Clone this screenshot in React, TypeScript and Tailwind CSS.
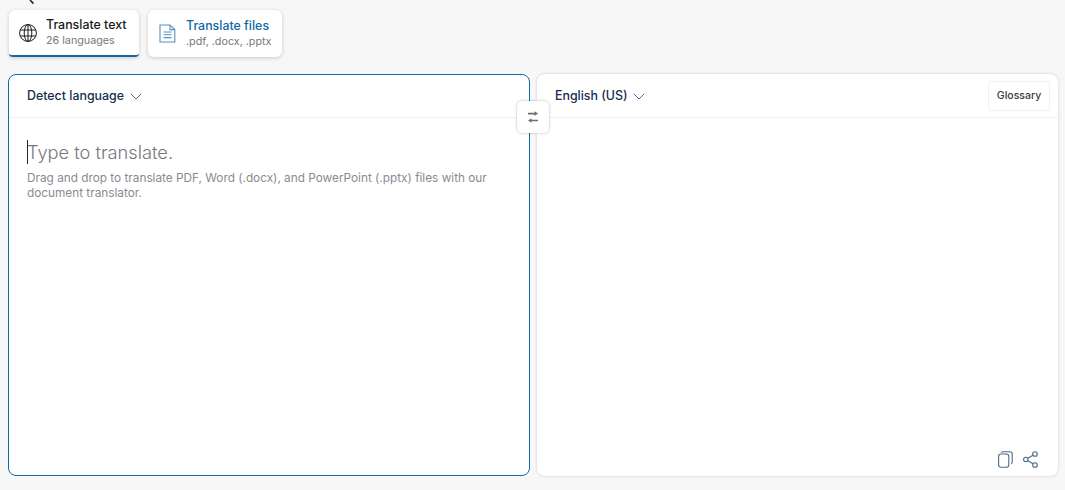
import React from "react";

const navy = "#0f2b46";

function Chevron() {
  return (
    <svg width="12" height="7" viewBox="0 0 12 7" fill="none" stroke="#5a6a7c" strokeWidth="1" strokeLinecap="round" strokeLinejoin="round" className="ml-[5.5px] mt-[1px]">
      <path d="M1 1l5 5 5-5" />
    </svg>
  );
}

export default function App() {
  return (
    <div className="relative w-[1065px] h-[490px] overflow-hidden bg-[#f7f7f7] font-['Inter','Liberation_Sans',sans-serif]">
      <svg width="8" height="5" viewBox="0 0 8 5" fill="none" stroke={navy} strokeWidth="1.6" className="absolute left-[29px] top-0">
        <path d="M1 0l3.5 3.6" />
      </svg>

      <div className="flex gap-[9px] pl-[9px] pt-[10px]">
        <div className="flex w-[130px] h-[47px] items-center rounded-[6px] rounded-b-[4px] bg-white border-b-[2px] border-[#0f6aa3] shadow-[0_1px_4px_rgba(0,0,0,0.18)] pl-[10px]">
          <svg width="18" height="18" viewBox="0 0 18 18" fill="none" stroke="#1a1a1a" strokeWidth="1" className="shrink-0">
            <circle cx="9" cy="9" r="8.4" />
            <ellipse cx="9" cy="9" rx="3.8" ry="8.4" />
            <path d="M1.3 6h15.4M1.3 12h15.4M9 .6v16.8" />
          </svg>
          <div className="ml-[9px] flex flex-col">
            <span className="text-[12.4px] leading-[16px] font-medium text-[#1a1a1a] whitespace-nowrap">Translate text</span>
            <span className="text-[10.75px] leading-[14px] mt-[1px] text-[#77777c] whitespace-nowrap">26 languages</span>
          </div>
        </div>
        <div className="flex w-[134px] h-[47px] items-center rounded-[6px] bg-white shadow-[0_1px_4px_rgba(0,0,0,0.18)] pl-[11px]">
          <svg width="17" height="19" viewBox="0 0 17 19" fill="none" stroke="#4f93bd" strokeWidth="1.1" className="shrink-0">
            <path d="M1 1h10l4.8 4.6V18H1z" />
            <path d="M11 1v4.6h4.8M4.5 8h8M4.5 10.8h8M4.5 13.6h8" />
          </svg>
          <div className="ml-[10px] flex flex-col">
            <span className="text-[12.4px] leading-[16px] font-medium text-[#0f6aa3] whitespace-nowrap">Translate files</span>
            <span className="text-[10.75px] leading-[14px] mt-[1px] text-[#77777c] whitespace-nowrap">.pdf, .docx, .pptx</span>
          </div>
        </div>
      </div>

      <div className="flex gap-[7px] pl-[8px] pt-[17px]">
        <section className="w-[522px] h-[402px] rounded-[8px] border border-[#0f6aa3] bg-white">
          <div className="flex h-[43px] items-center border-b border-[#f0f0f0] pl-[18px]">
            <span className="text-[12.4px] font-medium text-[#14304f]">Detect language</span>
            <Chevron />
          </div>
          <div className="pl-[18px] pr-[30px] pt-[21px]">
            <div className="relative text-[18.25px] leading-[26px] font-light text-[#77777c]">
              <span className="absolute left-0 top-[1px] h-[24px] w-px bg-[#1a2b3c]" />
              Type to translate.
            </div>
            <p className="mt-[6px] text-[11.8px] leading-[15px] text-[#8a8a8f]">
              Drag and drop to translate PDF, Word (.docx), and PowerPoint (.pptx) files with our document translator.
            </p>
          </div>
        </section>

        <section className="relative flex flex-col w-[521px] h-[402px] rounded-[8px] bg-white shadow-[0_0_3px_rgba(0,0,0,0.18)]">
          <div className="flex h-[44px] items-center border-b border-[#f0f0f0] pl-[18px] pr-[8px] shrink-0">
            <span className="mt-[2px] text-[12.4px] font-medium text-[#14304f]">English (US)</span>
            <Chevron />
            <div className="ml-auto flex h-[30px] w-[62px] items-center justify-center rounded-[3px] border border-[#f0f0f0] text-[10.5px] font-medium text-[#3a3a40]">
              Glossary
            </div>
          </div>
          <div className="flex-1" />
          <div className="flex items-center justify-end gap-[10px] pr-[20px] pb-[8px]">
            <svg width="15" height="17" viewBox="0 0 15 17" fill="none" stroke="#4a6a8a" strokeWidth="1.1">
              <rect x=".6" y="3" width="10.2" height="13.2" rx="2.4" />
              <path d="M3.4 1.6C3.8 1 4.4.7 5 .7h6.8c1.3 0 2.4 1 2.4 2.3v8.2c0 .7-.3 1.3-.9 1.6" />
            </svg>
            <svg width="15" height="17" viewBox="0 0 15 17" fill="none" stroke="#4a6a8a" strokeWidth="1.1">
              <circle cx="2.8" cy="8.5" r="2.2" />
              <circle cx="12" cy="3" r="2.3" />
              <circle cx="12" cy="14" r="2.3" />
              <path d="M4.7 7.3l5.3-3.1M4.7 9.7l5.3 3.1" />
            </svg>
          </div>
        </section>
      </div>

      <div className="absolute left-[517px] top-[101px] flex h-[32px] w-[32px] items-center justify-center rounded-[5px] bg-white shadow-[0_0_3px_rgba(0,0,0,0.28)]">
        <svg width="12" height="12" viewBox="0 0 12 12" fill="#6b6f75">
          <path d="M1 1.8h6.5V.3L11 2.6 7.5 4.9V3.4H1zM11 8.7H4.5V7.2L1 9.5l3.5 2.3v-1.5H11z" />
        </svg>
      </div>
    </div>
  );
}
